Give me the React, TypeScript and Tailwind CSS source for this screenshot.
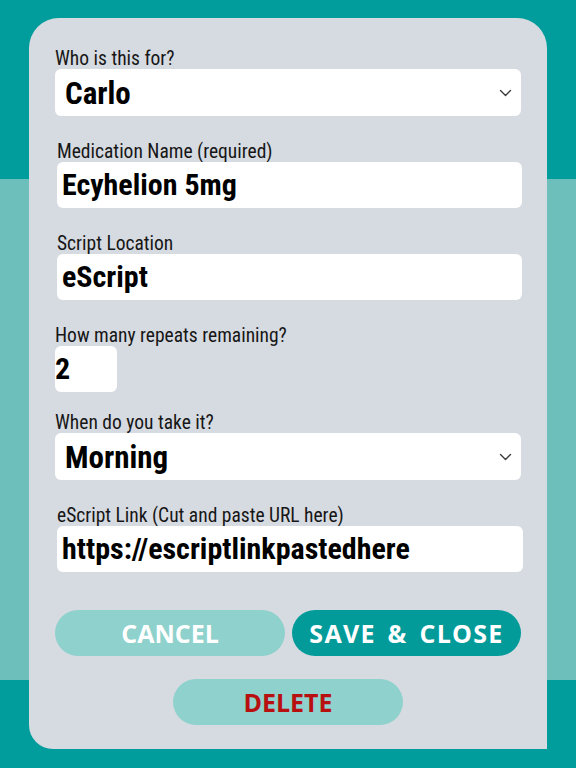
import React from "react";

const labelCls =
  "block h-[21px] text-[19.5px] leading-[21px] text-[#161616] font-['Roboto_Condensed','Liberation_Sans_Narrow','DejaVu_Sans_Condensed',Roboto,sans-serif] [font-stretch:condensed]";
const valueFont =
  "font-['Roboto_Condensed','Liberation_Sans_Narrow','DejaVu_Sans_Condensed',Roboto,sans-serif] [font-stretch:condensed] font-bold text-black";

function Chevron() {
  return (
    <svg
      className="pointer-events-none absolute right-[9px] top-1/2 -translate-y-1/2"
      width="13"
      height="8"
      viewBox="0 0 13 8"
      fill="none"
    >
      <path d="M1.5 1.5L6.5 6.5L11.5 1.5" stroke="#3a3a3a" strokeWidth="1.4" strokeLinecap="round" strokeLinejoin="round" />
    </svg>
  );
}

function SelectField({ label, value }: { label: string; value: string }) {
  return (
    <div className="flex flex-col">
      <label className={labelCls}>{label}</label>
      <div className="relative h-[47px] w-[466px]">
        <select
          defaultValue={value}
          className={`h-full w-full appearance-none rounded-[6px] bg-white pl-[10px] pt-[3px] text-[31px] leading-[44px] outline-none ${valueFont}`}
        >
          <option>{value}</option>
        </select>
        <Chevron />
      </div>
    </div>
  );
}

function InputField({
  label,
  value,
  widthCls,
  padCls,
  offsetCls,
}: {
  label: string;
  value: string;
  widthCls: string;
  padCls: string;
  offsetCls: string;
}) {
  return (
    <div className={`flex flex-col ${offsetCls}`}>
      <label className={labelCls}>{label}</label>
      <input
        readOnly
        value={value}
        className={`h-[46px] ${widthCls} ${padCls} rounded-[6px] bg-white text-[30px] leading-[46px] outline-none ${valueFont}`}
      />
    </div>
  );
}

export default function App() {
  return (
    <div className="h-[768px] w-[576px] overflow-hidden bg-[linear-gradient(to_bottom,#019c9c_0px,#019c9c_179px,#6cbfba_179px,#6cbfba_680px,#019c9c_680px,#019c9c_768px)] pt-[18px] pl-[29px]">
      <div className="flex h-[731px] w-[518px] flex-col rounded-tl-[30px] rounded-tr-[30px] rounded-bl-[24px] bg-[#d6dbe1] pl-[26px] pt-[30px]">
        <SelectField label="Who is this for?" value="Carlo" />
        <div className="mt-[25px]">
          <InputField
            label="Medication Name (required)"
            value="Ecyhelion 5mg"
            widthCls="w-[465px]"
            padCls="pl-[5px]"
            offsetCls="ml-[2px]"
          />
        </div>
        <div className="mt-[25px]">
          <InputField
            label="Script Location"
            value="eScript"
            widthCls="w-[465px]"
            padCls="pl-[5px]"
            offsetCls="ml-[2px]"
          />
        </div>
        <div className="mt-[25px]">
          <InputField
            label="How many repeats remaining?"
            value="2"
            widthCls="w-[62px]"
            padCls="pl-[0px]"
            offsetCls=""
          />
        </div>
        <div className="mt-[20px]">
          <SelectField label="When do you take it?" value="Morning" />
        </div>
        <div className="mt-[25px]">
          <InputField
            label="eScript Link (Cut and paste URL here)"
            value="https://escriptlinkpastedhere"
            widthCls="w-[466px]"
            padCls="pl-[5px]"
            offsetCls="ml-[2px]"
          />
        </div>
        <div className="mt-[38px] flex w-[466px] gap-[7px]">
          <button className="h-[46px] w-[230px] rounded-full bg-[#8fd1cc] font-['Open_Sans',sans-serif] text-[25px] font-bold leading-none text-white">
            CANCEL
          </button>
          <button className="h-[46px] w-[229px] rounded-full bg-[#039b9a] font-['Open_Sans',sans-serif] text-[25px] font-bold leading-none tracking-[1.3px] [word-spacing:4px] text-white">
            SAVE &amp; CLOSE
          </button>
        </div>
        <div className="mt-[23px] flex w-[466px] justify-center">
          <button className="h-[46px] w-[230px] rounded-full bg-[#8fd1cc] font-['Open_Sans',sans-serif] text-[25px] font-bold leading-none text-[#b81010]">
            DELETE
          </button>
        </div>
      </div>
    </div>
  );
}
